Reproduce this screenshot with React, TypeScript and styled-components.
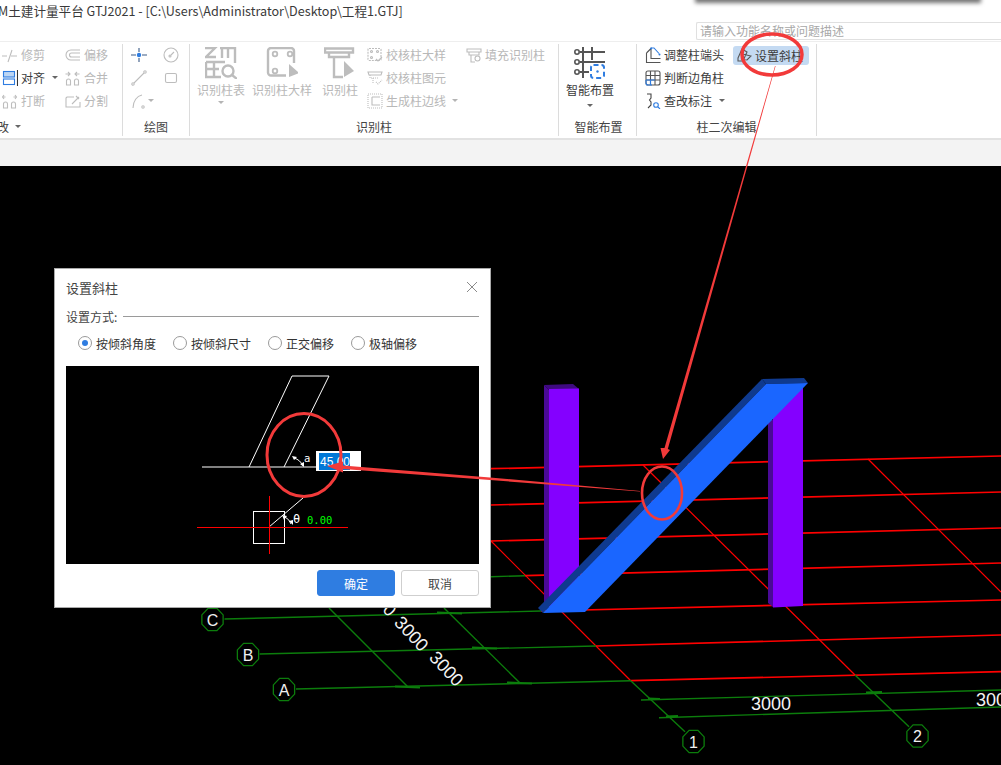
import React from "react"
import styled, { createGlobalStyle } from "styled-components"

const GRAY = "#bdbdbd"
const DARK = "#555"
const BLUE = "#2f7de1"
const RED = "#ff0000"
const GREEN = "#0c7d0c"
const MARK = "#f23a3a"

const GlobalStyle = createGlobalStyle`
  html, body {
    margin: 0;
    padding: 0;
    background: #000;
    overflow: hidden;
  }
  * { box-sizing: border-box; }
`

const Page = styled.div`
  position: relative;
  width: 1001px;
  height: 765px;
  overflow: hidden;
  background: #fff;
  font-family: "Noto Sans CJK SC", "Liberation Sans", sans-serif;
  font-size: 12px;
  color: #333;
`

const TitleBar = styled.div`
  position: relative;
  height: 41px;
  background: #fff;
  display: flex;
  justify-content: space-between;
`

const Title = styled.div`
  margin: 1px 0 0 -2px;
  height: 20px;
  line-height: 20px;
  font-size: 12.6px;
  white-space: nowrap;
  color: #3a3a3a;
`

const WindowEdge = styled.div`
  position: absolute;
  left: 697px;
  top: -6px;
  width: 282px;
  height: 6px;
  box-shadow: 0 1px 4px 2px rgba(0, 0, 0, 0.55);
`

const Search = styled.div`
  align-self: flex-end;
  width: 305px;
  height: 18px;
  margin-bottom: 1px;
  padding-left: 3px;
  border: 1px solid #e0e0e0;
  border-right: 0;
  border-radius: 2px 0 0 2px;
  line-height: 15px;
  color: #a8a8a8;
  white-space: nowrap;
`

const Ribbon = styled.div`
  display: flex;
  height: 99px;
  padding-top: 2px;
  background: #fff;
  border-top: 1px solid #eee;
  border-bottom: 2px solid #e2e2e2;
`

const Group = styled.div<{ $width: number }>`
  display: flex;
  flex-direction: column;
  flex: 0 0 ${p => p.$width}px;
  width: ${p => p.$width}px;
  height: 92px;
  border-right: 1px solid #dcdcdc;
  overflow: hidden;
`

const GroupBody = styled.div<{ $pad?: number; $gap?: number }>`
  display: flex;
  height: 74px;
  padding-left: ${p => p.$pad ?? 0}px;
  gap: ${p => p.$gap ?? 0}px;
`

const GroupLabel = styled.div<{ $shift?: number }>`
  display: flex;
  justify-content: center;
  align-items: center;
  height: 16px;
  margin-left: ${p => p.$shift ?? 0}px;
  color: #444;
  white-space: nowrap;
`

const ClippedLabel = styled(GroupLabel)`
  justify-content: flex-start;
  margin-left: -15px;
`

const Column = styled.div<{ $width?: number; $left?: number }>`
  display: flex;
  flex-direction: column;
  margin: -1px 0 0 ${p => p.$left ?? 0}px;
  width: ${p => (p.$width ? `${p.$width}px` : "auto")};
`

const SmallButton = styled.div<{ $off?: boolean; $active?: boolean }>`
  display: flex;
  align-items: center;
  gap: 3px;
  height: ${p => (p.$active ? "19px" : "23px")};
  margin-top: ${p => (p.$active ? "3px" : "0")};
  padding-left: ${p => (p.$active ? "4px" : "0")};
  border-radius: 3px;
  background: ${p => (p.$active ? "#c4daf2" : "transparent")};
  color: ${p => (p.$off ? "#b8b8b8" : "#3c3c3c")};
  white-space: nowrap;
`

const LargeButton = styled.div<{ $width: number; $off?: boolean; $left?: number }>`
  display: flex;
  flex-direction: column;
  align-items: center;
  width: ${p => p.$width}px;
  margin-left: ${p => p.$left ?? 0}px;
  padding-top: 3px;
  color: ${p => (p.$off ? "#b8b8b8" : "#3c3c3c")};
  white-space: nowrap;
`

const LargeText = styled.div`
  margin-top: 3px;
  height: 16px;
  line-height: 16px;
`

const Caret = styled.span<{ $off?: boolean; $gap?: number }>`
  display: inline-block;
  width: 0;
  height: 0;
  margin-left: ${p => p.$gap ?? 4}px;
  border-left: 3px solid transparent;
  border-right: 3px solid transparent;
  border-top: 3px solid ${p => (p.$off ? "#b4b4b4" : "#666")};
`

const LargeCaret = styled(Caret)<{ $top: number }>`
  margin: ${p => p.$top}px 0 0;
`

const IconRow = styled.div`
  display: flex;
  align-items: center;
  height: 23px;
`

const Strip = styled.div`
  height: 26px;
  background: #f3f3f3;
`

const Canvas = styled.div`
  position: relative;
  height: 599px;
  background: #000;
  overflow: hidden;
`

const Scene = styled.svg`
  display: block;
  width: 1001px;
  height: 599px;
`

const Dialog = styled.div`
  position: absolute;
  left: 54px;
  top: 102px;
  width: 437px;
  height: 340px;
  display: flex;
  flex-direction: column;
  padding: 0 11px;
  background: #fff;
  border: 1px solid #a9a9a9;
`

const DialogHead = styled.div`
  display: flex;
  justify-content: space-between;
  align-items: center;
  height: 36px;
  font-size: 13px;
  color: #444;
`

const CloseIcon = styled.svg`
  width: 12px;
  height: 12px;
  margin-right: 1px;
`

const Legend = styled.div`
  display: flex;
  align-items: center;
  gap: 6px;
  height: 20px;
  margin-top: 1px;
  color: #444;
  &::after {
    content: "";
    flex: 1;
    height: 1px;
    background: #9a9a9a;
  }
`

const RadioRow = styled.div`
  display: flex;
  align-items: center;
  height: 30px;
  margin-top: 2px;
  padding-left: 12px;
`

const RadioItem = styled.label<{ $width: number }>`
  display: flex;
  align-items: center;
  gap: 4px;
  width: ${p => p.$width}px;
  color: #333;
  white-space: nowrap;
`

const RadioMark = styled.span<{ $on?: boolean }>`
  position: relative;
  width: 14px;
  height: 14px;
  border-radius: 50%;
  border: 1px solid #9a9a9a;
  background: #fff;
  &::after {
    content: "";
    display: ${p => (p.$on ? "block" : "none")};
    position: absolute;
    left: 3px;
    top: 3px;
    width: 6px;
    height: 6px;
    border-radius: 50%;
    background: ${BLUE};
  }
`

const Preview = styled.div`
  position: relative;
  height: 198px;
  margin-top: 8px;
  background: #000;
`

const PreviewArt = styled.svg`
  display: block;
  width: 413px;
  height: 198px;
`

const AngleInput = styled.div`
  position: absolute;
  left: 250px;
  top: 85px;
  width: 45px;
  height: 20px;
  padding: 2px 0 0 3px;
  background: #fff;
`

const Selected = styled.span`
  display: block;
  width: 31px;
  height: 17px;
  padding-left: 1px;
  line-height: 18px;
  background: #0078d7;
  color: #fff;
  font-size: 12px;
  font-family: "Liberation Sans", sans-serif;
`

const DialogFoot = styled.div`
  display: flex;
  justify-content: flex-end;
  gap: 6px;
  margin-top: 6px;
`

const FootButton = styled.button<{ $primary?: boolean }>`
  width: 78px;
  height: 26px;
  padding: 0;
  border-radius: 3px;
  border: 1px solid ${p => (p.$primary ? BLUE : "#cfcfcf")};
  background: ${p => (p.$primary ? BLUE : "#fff")};
  color: ${p => (p.$primary ? "#fff" : "#444")};
  font: inherit;
`

const Markup = styled.svg`
  position: absolute;
  left: 0;
  top: 0;
  width: 1001px;
  height: 765px;
  pointer-events: none;
`

const IconSvg = styled.svg`
  display: block;
  flex: none;
  fill: none;
`

const Ico = ({ size = 16, children }: { size?: number; children: React.ReactNode }) => (
  <IconSvg width={size} height={size} viewBox={`0 0 ${size} ${size}`} strokeWidth={1.1} stroke={GRAY}>
    {children}
  </IconSvg>
)

const Trim = () => <Ico><path d="M0 9h5M9 9h6M10 3 6 15" /></Ico>
const Align = () => (
  <Ico>
    <rect x="1.5" y="1.5" width="11" height="5.5" fill="#bcd6f4" stroke={BLUE} />
    <rect x="1.5" y="9" width="11" height="5.5" fill="#fff" stroke={BLUE} />
    <path d="M15.5 0v16" stroke="#333" />
  </Ico>
)
const Break = () => (
  <Ico>
    <path d="M1.5 15V11a2 2 0 0 1 4 0v4h-4zM9.5 15V11a2 2 0 0 1 4 0v4h-4zM2 2l-1.5 2L2 6M13 2l1.5 2L13 6M.5 4h3M14.5 4h-3" />
  </Ico>
)
const Offset = () => (
  <Ico>
    <path d="M15 3H6a5 5 0 0 0 0 10h9M15 6H6.5a2 2 0 0 0 0 4H15" />
  </Ico>
)
const Merge = () => (
  <Ico>
    <path d="M1.5 15V11a2 2 0 0 1 4 0v4h-4zM9.5 15V11a2 2 0 0 1 4 0v4h-4zM3 2l2 2-2 2M12 2l-2 2 2 2M.5 4h4M14.5 4h-4" />
  </Ico>
)
const Split = () => (
  <Ico><path d="M9 4H2l-1 1v9h14V9M7 11l7-7M11 3l3 3" /></Ico>
)
const Cross = () => (
  <Ico>
    <path d="M0 8h5M11 8h5M8 1v4M8 11v4" stroke="#3a5a86" />
    <circle cx="8" cy="8" r="2.2" fill={BLUE} stroke="none" />
  </Ico>
)
const Gauge = () => (
  <Ico><circle cx="8" cy="8" r="7" /><circle cx="7" cy="9" r="1" /><path d="M8 8l3-3" /></Ico>
)
const Slash = () => (
  <Ico><path d="M3 13 13 3" /><circle cx="2" cy="14" r="1.2" /><circle cx="14" cy="2" r="1.2" /></Ico>
)
const Box = () => <Ico><rect x="2.5" y="3.5" width="11" height="9" rx="1.5" /></Ico>
const Arc = () => (
  <Ico>
    <path d="M2 15C2 8 6 3 11 2" />
    <circle cx="12" cy="14" r="1.2" />
  </Ico>
)

const TableScan = () => (
  <Ico size={32}>
    <g strokeWidth={2.4}>
      <path d="M0 1h10L1 10h10M15 1h15v15M17 1v10M23 1v10M1 15h19M1 15v15h15M1 22h13M9 15v15" />
      <circle cx="23" cy="24" r="5.5" />
      <path d="M27 28l5 4" />
    </g>
  </Ico>
)
const ColumnDetail = () => (
  <Ico size={32}>
    <path d="M20 28.5H5a3 3 0 0 1-3-3V4a3 3 0 0 1 3-3h20a3 3 0 0 1 3 3v12" strokeWidth={2.4} />
    <circle cx="9" cy="7" r="2.3" strokeWidth={1.8} />
    <circle cx="24" cy="7" r="2.3" strokeWidth={1.8} />
    <circle cx="9" cy="24" r="2.3" strokeWidth={1.8} />
    <path d="M23 17l10 9-10 4z" fill={GRAY} stroke="none" />
  </Ico>
)
const ColumnPick = () => (
  <Ico size={32}>
    <path d="M1 1.5h28v4H1zM5 6v4h20V6M10 10v20h9" strokeWidth={2.4} />
    <path d="M20 14l10 10-10 6z" fill={GRAY} stroke="none" />
  </Ico>
)
const SmartLayout = () => (
  <Ico size={32}>
    <g stroke={DARK} strokeWidth={2}>
      <path d="M6 5h25M6 15h25M6 25h9M9 0v31M18 0v13" />
      <circle cx="3" cy="5" r="2.2" strokeWidth={1.6} />
      <circle cx="3" cy="15" r="2.2" strokeWidth={1.6} />
      <circle cx="3" cy="25" r="2.2" strokeWidth={1.6} />
    </g>
    <rect x="17" y="18" width="13" height="13" rx="2.5" stroke={BLUE} strokeWidth={2} strokeDasharray="5 3" />
    <circle cx="23.5" cy="24.5" r="1.2" fill={BLUE} stroke="none" />
  </Ico>
)

const CheckDetail = () => (
  <Ico>
    <rect x="1" y="1.5" width="13" height="12" rx="1" strokeDasharray="2 1" />
    <circle cx="4.5" cy="4.5" r="1" />
    <circle cx="10.5" cy="4.5" r="1" />
    <circle cx="4.5" cy="10.5" r="1" />
    <path d="M9 12l2 2 4-4" />
  </Ico>
)
const CheckShape = () => (
  <Ico><path d="M1 2h14l-1 3H2z" /><path d="M3 5v3h9M6 8v6M9 12l2 2 4-4" strokeDasharray="1 1" /></Ico>
)
const MakeEdge = () => (
  <Ico>
    <rect x="1" y="1" width="14" height="14" strokeDasharray="1 1" />
    <path d="M5 4h8M5 4v8h8" />
  </Ico>
)
const FillPick = () => (
  <Ico><path d="M1 2h14v3H1zM3 5v3h10V5M5 8v7h4" /><circle cx="11.5" cy="11.5" r="2.5" /></Ico>
)

const AdjustEnd = () => (
  <Ico>
    <path d="M1.5 6v9.500h14M1.5 6l5-5M6 2v9.500h9.500" stroke={DARK} />
    <path d="M6 1h3l5 5.500" stroke={BLUE} />
    <circle cx="6" cy="1.5" r="1" fill={BLUE} stroke="none" />
    <circle cx="14.5" cy="7.5" r="1" fill={BLUE} stroke="none" />
  </Ico>
)
const CornerGrid = () => (
  <Ico>
    <rect x="1" y="1" width="14" height="14" rx="2" stroke={DARK} />
    <path d="M1 5.5h14M1 10h14M5.5 1v14M10 1v14" stroke={DARK} />
    <path d="M1 10v3a2 2 0 0 0 2 2h4M5.5 10V15M1 10h9" stroke={BLUE} />
  </Ico>
)
const EditNote = () => (
  <Ico>
    <path d="M2 1h4v4L4.5 7 6 9v3l-3 3" stroke="#444" />
    <circle cx="11" cy="12" r="2.3" stroke={BLUE} />
    <path d="M13 14l2 2" stroke={BLUE} />
  </Ico>
)
const SlantColumn = () => (
  <Ico size={15}>
    <path d="M1 10 5 1l5 3-4 9-5 0zM5 6l9 2-4 4-6-1" stroke={DARK} />
  </Ico>
)

const Bubble = ({ x, y, label }: { x: number; y: number; label: string }) => {
  const points = Array.from({ length: 8 }, (_, i) => {
    const a = (Math.PI / 8) * (2 * i + 1)
    return `${x + 11.5 * Math.cos(a)},${y + 12 * Math.sin(a)}`
  }).join(" ")
  return (
    <g>
      <polygon points={points} fill="#000" stroke={GREEN} strokeWidth={1.3} />
      <text x={x} y={y + 6} fill="#f0f0f0" fontSize="16" textAnchor="middle" fontFamily="Liberation Sans, sans-serif">
        {label}
      </text>
    </g>
  )
}

const Dim = ({ x, y, angle = 0 }: { x: number; y: number; angle?: number }) => (
  <text
    x={x}
    y={y}
    fill="#f4f4f4"
    fontSize="18"
    textAnchor="middle"
    fontFamily="Liberation Sans, sans-serif"
    transform={angle ? `rotate(${angle} ${x} ${y})` : undefined}
  >
    3000
  </text>
)

const redRows = [
  [491, 468.7, 1001, 456],
  [491, 505, 1001, 492],
  [491, 541, 1001, 528],
  [525, 575.7, 1001, 563],
  [541, 611, 1001, 600],
  [596, 646, 1001, 635],
  [631, 680.7, 1001, 671.7],
]

const greenLines = [
  [224.5, 619, 541, 611],
  [259.6, 654, 596, 646],
  [296, 689, 631, 680.7],
  [641, 700, 1001, 690],
  [659, 717.7, 1001, 707],
  [631, 681, 685, 731.7],
  [855, 675, 909, 726.7],
  [329, 608, 408, 687],
  [444, 608, 520, 683],
  [491, 576.7, 525, 575.7],
]

const redCross = [
  [491, 541, 631, 681],
  [643, 465, 855, 675],
  [868, 459, 1001, 592],
]

const ticks = [
  [437, 612.5, 462, 613.5],
  [472, 647.5, 497, 648.5],
  [395, 686.5, 420, 687.5],
  [507, 682.5, 532, 683.5],
  [648, 698.5, 660, 699],
  [666, 716.5, 678, 716],
  [866, 692.5, 882, 692],
]

const Line = ({ c, color, width }: { c: number[]; color: string; width: number }) => (
  <line x1={c[0]} y1={c[1]} x2={c[2]} y2={c[3]} stroke={color} strokeWidth={width} />
)

const ModelScene = () => (
  <Scene viewBox="0 166 1001 599">
    {redRows.map(c => <Line key={c.join()} c={c} color={RED} width={1.7} />)}
    {redCross.map(c => <Line key={c.join()} c={c} color={RED} width={1.2} />)}
    {greenLines.map(c => <Line key={c.join()} c={c} color={GREEN} width={1.4} />)}
    {ticks.map(c => <Line key={c.join()} c={c} color={GREEN} width={2.2} />)}

    <polygon points="544,385 573,384 579,389 549,390" fill="#3f0a80" />
    <polygon points="544,385 549,390 549,607 544,604" fill="#4a0a96" />
    <polygon points="549,389 579,388.5 579,606 549,607" fill="#8400ff" />
    <polygon points="768,420 773,420 773,607 768,603" fill="#4a0a96" />
    <polygon points="773,385 803,385 803,606 773,607.5" fill="#8400ff" />

    <polygon points="762,379 804,378 808,383 766,384" fill="#0f3a8f" />
    <polygon points="762,379 766,384 543,613 538,608" fill="#0f3a8f" />
    <polygon points="766,384 808,383 585,612 543,613" fill="#1a66ff" />

    <Dim x={375} y={603} angle={47} />
    <Dim x={407} y={638} angle={47} />
    <Dim x={442} y={673} angle={47} />
    <Dim x={771} y={710} />
    <Dim x={996} y={706} />

    <Bubble x={212.5} y={619.5} label="C" />
    <Bubble x={248} y={654.5} label="B" />
    <Bubble x={284} y={689.5} label="A" />
    <Bubble x={693.5} y={741.5} label="1" />
    <Bubble x={917.5} y={736} label="2" />
  </Scene>
)

const AngleDiagram = () => (
  <PreviewArt viewBox="0 0 413 198">
    <g fill="none" stroke="#fff" strokeWidth={1}>
      <polyline points="183,101 226,10 263,10 218,101" />
      <line x1="136" y1="101" x2="250" y2="101" strokeWidth={1.2} />
      <path d="M228 92a14 14 0 0 1 9 8" />
      <rect x="187.5" y="145.5" width="31" height="32" />
      <line x1="203" y1="161" x2="237" y2="132" />
      <path d="M219 151a12 12 0 0 1 6 7" />
    </g>
    <path d="M226 90l5 1-3 3zM238 101l-4-3 4-2z" fill="#fff" />
    <path d="M216 149l5 1-3 4zM227 159l-4-4 4-1z" fill="#fff" />
    <g stroke={RED} strokeWidth={1}>
      <line x1="131" y1="161.5" x2="282" y2="161.5" />
      <line x1="203.5" y1="130" x2="203.5" y2="188" />
    </g>
    <g fontFamily="DejaVu Sans Mono, monospace" fontSize="10.5">
      <text x="238" y="96" fill="#fff">a</text>
      <text x="227" y="157" fill="#fff" fontSize="12">θ</text>
      <text x="241" y="158" fill="#00ff00">0.00</text>
    </g>
  </PreviewArt>
)

const radios = [
  { label: "按倾斜角度", width: 95, on: true },
  { label: "按倾斜尺寸", width: 95 },
  { label: "正交偏移", width: 83 },
  { label: "极轴偏移", width: 83 },
]

const SlantDialog = () => (
  <Dialog>
    <DialogHead>
      设置斜柱
      <CloseIcon viewBox="0 0 12 12" fill="none" stroke="#8a8a8a" strokeWidth={1}>
        <path d="M1 1l10 10M11 1 1 11" />
      </CloseIcon>
    </DialogHead>
    <Legend>设置方式:</Legend>
    <RadioRow>
      {radios.map(r => (
        <RadioItem key={r.label} $width={r.width}>
          <RadioMark $on={r.on} />
          {r.label}
        </RadioItem>
      ))}
    </RadioRow>
    <Preview>
      <AngleDiagram />
      <AngleInput><Selected>45.00</Selected></AngleInput>
    </Preview>
    <DialogFoot>
      <FootButton $primary>确定</FootButton>
      <FootButton>取消</FootButton>
    </DialogFoot>
  </Dialog>
)

const RibbonBar = () => (
  <Ribbon>
    <Group $width={123}>
      <GroupBody $pad={2} $gap={19}>
        <Column $width={44}>
          <SmallButton $off><Trim />修剪</SmallButton>
          <SmallButton><Align />对齐<Caret /></SmallButton>
          <SmallButton $off><Break />打断</SmallButton>
        </Column>
        <Column>
          <SmallButton $off><Offset />偏移</SmallButton>
          <SmallButton $off><Merge />合并</SmallButton>
          <SmallButton $off><Split />分割</SmallButton>
        </Column>
      </GroupBody>
      <ClippedLabel>修改<Caret $gap={6} /></ClippedLabel>
    </Group>

    <Group $width={67}>
      <GroupBody $pad={8} $gap={16}>
        <Column $width={16}>
          <IconRow><Cross /></IconRow>
          <IconRow><Slash /></IconRow>
          <IconRow><Arc /><Caret $off $gap={1} /></IconRow>
        </Column>
        <Column $width={16}>
          <IconRow><Gauge /></IconRow>
          <IconRow><Box /></IconRow>
        </Column>
      </GroupBody>
      <GroupLabel>绘图</GroupLabel>
    </Group>

    <Group $width={369}>
      <GroupBody $pad={7}>
        <LargeButton $width={48} $off>
          <TableScan />
          <LargeText>识别柱表</LargeText>
          <LargeCaret $off $top={3} />
        </LargeButton>
        <LargeButton $width={60} $off $left={7}>
          <ColumnDetail />
          <LargeText>识别柱大样</LargeText>
        </LargeButton>
        <LargeButton $width={36} $off $left={10}>
          <ColumnPick />
          <LargeText>识别柱</LargeText>
        </LargeButton>
        <Column $width={99} $left={9}>
          <SmallButton $off><CheckDetail />校核柱大样</SmallButton>
          <SmallButton $off><CheckShape />校核柱图元</SmallButton>
          <SmallButton $off><MakeEdge />生成柱边线<Caret $off $gap={3} /></SmallButton>
        </Column>
        <Column>
          <SmallButton $off><FillPick />填充识别柱</SmallButton>
        </Column>
      </GroupBody>
      <GroupLabel>识别柱</GroupLabel>
    </Group>

    <Group $width={78}>
      <GroupBody $pad={7}>
        <LargeButton $width={48}>
          <SmartLayout />
          <LargeText>智能布置</LargeText>
          <LargeCaret $top={6} />
        </LargeButton>
      </GroupBody>
      <GroupLabel $shift={2}>智能布置</GroupLabel>
    </Group>

    <Group $width={180}>
      <GroupBody $pad={8} $gap={9}>
        <Column $width={79}>
          <SmallButton><AdjustEnd />调整柱端头</SmallButton>
          <SmallButton><CornerGrid />判断边角柱</SmallButton>
          <SmallButton><EditNote />查改标注<Caret $gap={4} /></SmallButton>
        </Column>
        <Column $width={76}>
          <SmallButton $active><SlantColumn />设置斜柱</SmallButton>
        </Column>
      </GroupBody>
      <GroupLabel>柱二次编辑</GroupLabel>
    </Group>
  </Ribbon>
)

const App = () => (
  <Page>
    <GlobalStyle />
    <TitleBar>
      <Title>M土建计量平台 GTJ2021 - [C:\Users\Administrator\Desktop\工程1.GTJ]</Title>
      <WindowEdge />
      <Search>请输入功能名称或问题描述</Search>
    </TitleBar>
    <RibbonBar />
    <Strip />
    <Canvas>
      <ModelScene />
      <SlantDialog />
    </Canvas>
    <Markup viewBox="0 0 1001 765">
      <ellipse cx="772" cy="54.5" rx="30" ry="20.5" fill="none" stroke={MARK} strokeWidth={3.5} />
      <polygon points="775,66 775.6,66 667.8,449 670,450 663,459 660.5,448 664.5,448" fill={MARK} />
      <ellipse cx="304" cy="455" rx="37" ry="41.5" fill="none" stroke={MARK} strokeWidth={3} />
      <ellipse cx="662" cy="493" rx="20" ry="26.5" fill="none" stroke={MARK} strokeWidth={2.6} />
      <polygon points="327,466 343,461.5 343,465.5 490,477.5 640,491 640,491.5 490,480 343,469 343,472.5" fill={MARK} />
    </Markup>
  </Page>
)

export default App
